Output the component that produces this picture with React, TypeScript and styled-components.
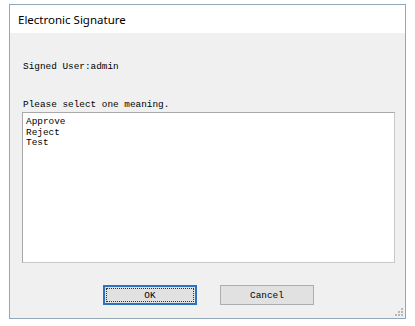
import styled, { createGlobalStyle } from "styled-components";

const GlobalStyle = createGlobalStyle`
  html, body {
    margin: 0;
    padding: 0;
    background: #ffffff;
  }
`;

const colours = {
  frame: "#92a8b8",
  body: "#f0f0f0",
  field: "#ffffff",
  fieldBorder: "#a9a9a9",
  button: "#e1e1e1",
  buttonBorder: "#adadad",
  focus: "#2c73c2",
};

const Window = styled.div`
  display: flex;
  flex-direction: column;
  box-sizing: border-box;
  margin: 4px 0 0 9px;
  width: 397px;
  height: 315px;
  border: 1px solid ${colours.frame};
  background: ${colours.body};
  position: relative;
`;

const TitleBar = styled.header`
  display: flex;
  align-items: center;
  height: 28px;
  padding-left: 8px;
  background: #ffffff;
  font-family: "Noto Sans", sans-serif;
  font-size: 11.5px;
  color: #000;
`;

const Body = styled.div`
  flex: 1;
  display: flex;
  flex-direction: column;
  padding: 28px 10px 0 12px;
  font-family: "Liberation Mono", monospace;
  font-size: 9.4px;
  color: #000;
`;

const Label = styled.div<{ $gap?: number }>`
  line-height: 12px;
  padding-left: 1px;
  margin-bottom: ${(p) => p.$gap ?? 0}px;
`;

const ListBox = styled.ul`
  list-style: none;
  margin: 1px 0 0;
  box-sizing: border-box;
  height: 151px;
  padding: 4px 3px;
  background: ${colours.field};
  border: 1px solid ${colours.fieldBorder};
  border-right-color: #c8c8c8;
  border-bottom-color: #c8c8c8;
`;

const ListItem = styled.li`
  line-height: 10.5px;
`;

const ButtonRow = styled.div`
  display: flex;
  justify-content: center;
  gap: 23px;
  margin-top: 22px;
`;

const Button = styled.button<{ $focused?: boolean }>`
  box-sizing: border-box;
  width: 94px;
  height: 20px;
  padding: 1px;
  background: ${colours.button};
  border: ${(p) => (p.$focused ? `2px solid ${colours.focus}` : `1px solid ${colours.buttonBorder}`)};
  font-family: "Liberation Mono", monospace;
  font-size: 9.4px;
  color: #000;
  display: flex;
`;

const ButtonFace = styled.span<{ $focused?: boolean }>`
  flex: 1;
  display: flex;
  align-items: center;
  justify-content: center;
  border: 1px dotted ${(p) => (p.$focused ? "#333" : "transparent")};
`;

const Grip = styled.svg`
  position: absolute;
  right: 2px;
  bottom: 2px;
`;

export default function App() {
  return (
    <>
      <GlobalStyle />
      <Window>
        <TitleBar>Electronic Signature</TitleBar>
        <Body>
          <Label $gap={26}>Signed User:admin</Label>
          <Label>Please select one meaning.</Label>
          <ListBox>
            <ListItem>Approve</ListItem>
            <ListItem>Reject</ListItem>
            <ListItem>Test</ListItem>
          </ListBox>
          <ButtonRow>
            <Button $focused>
              <ButtonFace $focused>OK</ButtonFace>
            </Button>
            <Button>
              <ButtonFace>Cancel</ButtonFace>
            </Button>
          </ButtonRow>
        </Body>
        <Grip width="8" height="8" viewBox="0 0 8 8">
          <g fill="#b8b8b8">
            <rect x="6" y="0" width="2" height="2" />
            <rect x="3" y="3" width="2" height="2" />
            <rect x="6" y="3" width="2" height="2" />
            <rect x="0" y="6" width="2" height="2" />
            <rect x="3" y="6" width="2" height="2" />
            <rect x="6" y="6" width="2" height="2" />
          </g>
        </Grip>
      </Window>
    </>
  );
}
